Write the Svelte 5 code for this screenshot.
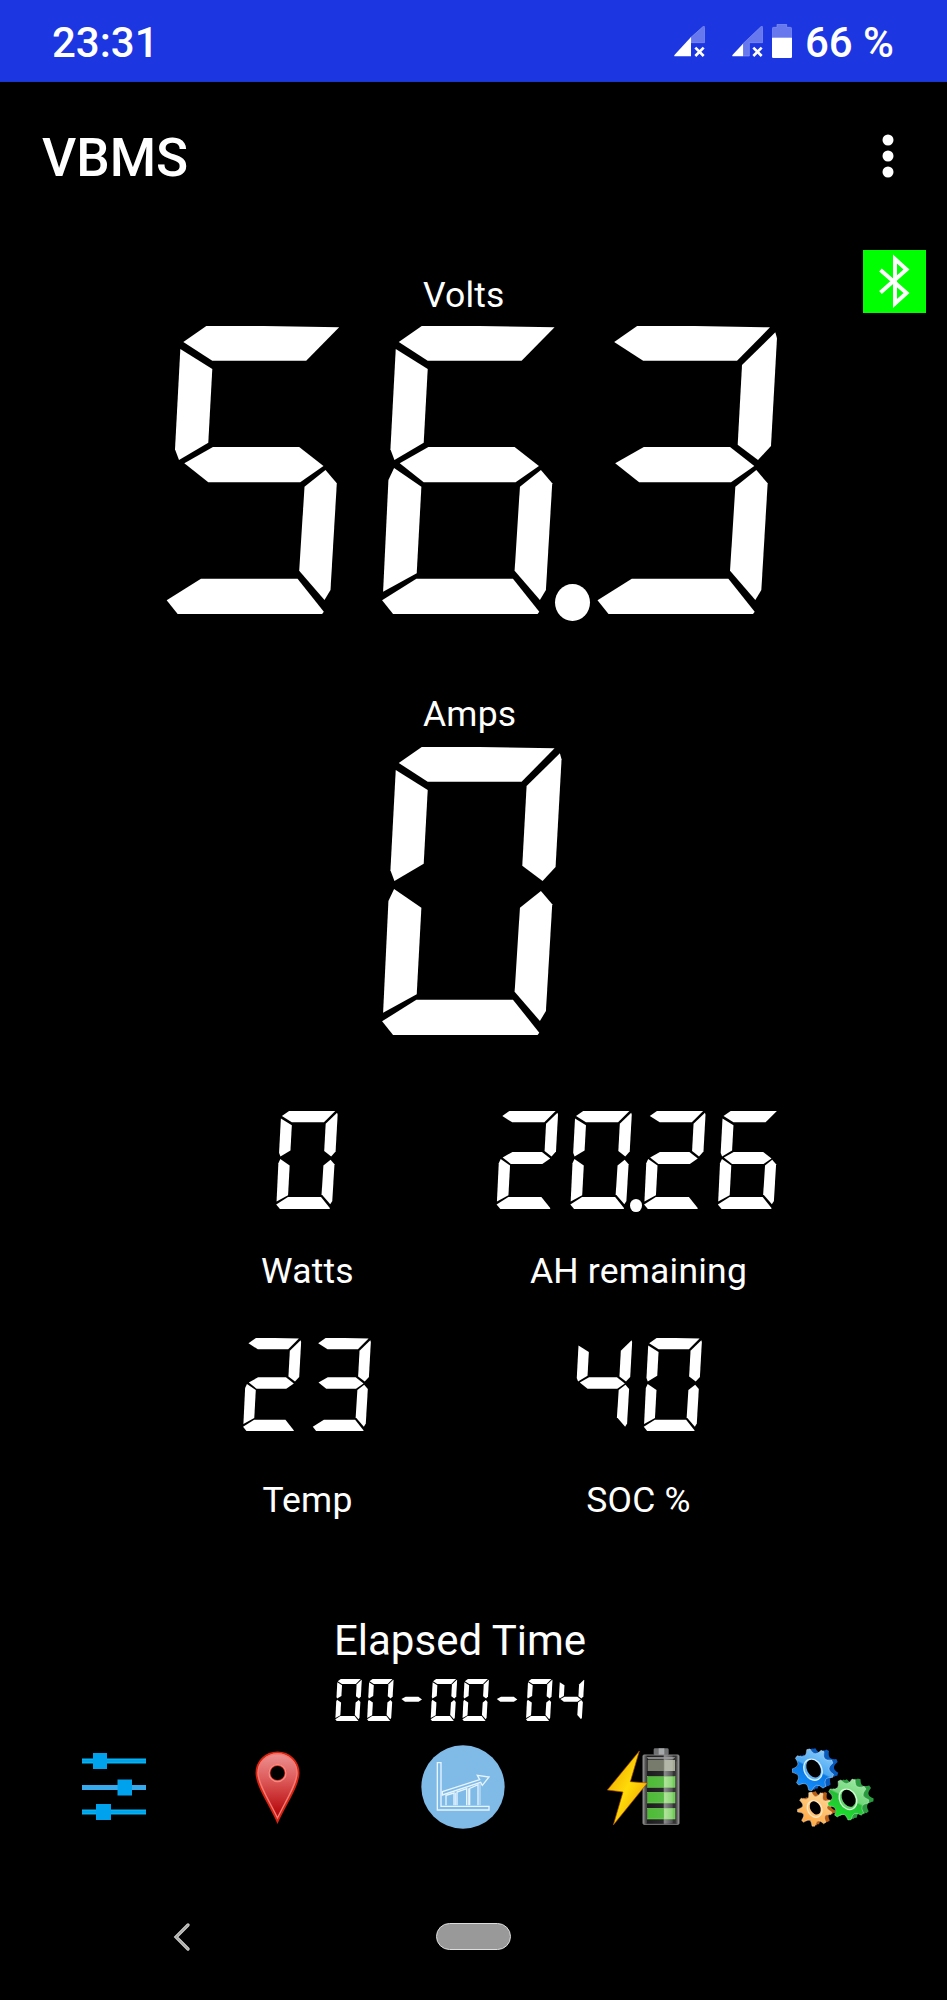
<script lang="ts">
	type Point = [number, number];

	interface Reading {
		value: string;
		label: string;
	}

	// One digit cell is 647 x 864 units, segments are named a-g clockwise from the top
	const CELL_W = 647;
	const CELL_H = 864;
	const shapes: Record<string, Point[]> = {
		a: [[99, 48], [168, 0], [340, 0], [567, 4], [468, 104], [186, 104]],
		b: [[583, 19], [588, 37], [570, 360], [531, 402], [470, 356], [483, 117]],
		c: [[526, 432], [560, 472], [541, 792], [523, 822], [447, 734], [463, 482]],
		d: [[49, 823], [152, 758], [442, 758], [521, 857], [516, 864], [82, 864]],
		e: [[85, 426], [167, 482], [153, 742], [52, 797], [68, 462]],
		f: [[90, 69], [186, 129], [174, 350], [86, 402], [74, 370]],
		g: [[102, 412], [188, 363], [447, 363], [520, 420], [450, 469], [174, 469]]
	};
	const lit: Record<string, string> = {
		'0': 'abcdef',
		'1': 'bc',
		'2': 'abged',
		'3': 'abgcd',
		'4': 'fgbc',
		'5': 'afgcd',
		'6': 'afgecd',
		'7': 'abc',
		'8': 'abcdefg',
		'9': 'abcdfg',
		'-': 'g'
	};

	function clip(seg: string) {
		const pts = shapes[seg].map(([x, y]) => `${((x / CELL_W) * 100).toFixed(2)}% ${((y / CELL_H) * 100).toFixed(2)}%`);
		return `polygon(${pts.join(', ')})`;
	}

	// Pointed teeth with a rounded valley between each pair
	function gear(cx: number, cy: number, r: number, depth: number, teeth: number, turn: number) {
		const step = (Math.PI * 2) / teeth;
		const at = (i: number, rad: number) => {
			const t = turn + i * step;
			return `${(cx + Math.cos(t) * rad).toFixed(1)} ${(cy + Math.sin(t) * rad).toFixed(1)}`;
		};
		let d = `M${at(-0.11, r)}`;
		for (let i = 0; i < teeth; i++) {
			d += `L${at(i + 0.11, r)}Q${at(i + 0.28, r - depth)} ${at(i + 0.5, r - depth)}`;
			d += `Q${at(i + 0.72, r - depth)} ${at(i + 0.89, r)}`;
		}
		return d + 'Z';
	}

	const volts = '56.3';
	const amps = '0';
	const elapsed = '00-00-04';
	const capacity: Reading[] = [
		{ value: '0', label: 'Watts' },
		{ value: '20.26', label: 'AH remaining' }
	];
	const state: Reading[] = [
		{ value: '23', label: 'Temp' },
		{ value: '40', label: 'SOC %' }
	];
	const gears = [
		{ name: 'orange', cx: 68, cy: 192, r: 52, turn: 0.25, dx: 13, dy: -4, hx: 15, hy: 21 },
		{ name: 'green', cx: 168, cy: 163, r: 62, turn: 0.1, dx: 17, dy: -4, hx: 19, hy: 27 },
		{ name: 'blue', cx: 63, cy: 74, r: 63, turn: 0.3, dx: 16, dy: -4, hx: 20, hy: 28 }
	];
</script>

{#snippet display(value: string, size: string)}
	<div class="display {size}" role="img" aria-label={value}>
		{#each value as char}
			{#if char === '.'}
				<span class="point"></span>
			{:else}
				<span class="digit">
					{#each lit[char] as seg}
						<span class="segment" style:clip-path={clip(seg)}></span>
					{/each}
				</span>
			{/if}
		{/each}
	</div>
{/snippet}

<div class="screen">
	<header class="status">
		<span class="clock">23:31</span>
		<div class="indicators">
			<svg class="signal" width="31" height="31" viewBox="0 0 93 93">
				<path d="M51 34L88 1Q92 0 92 5V50H51Z" fill="#6778ee" stroke="#8795f3" stroke-width="2" />
				<path d="M51 33V91H3Q-1 90 2 86Z" fill="#fff" />
				<path d="M64 65L89 90M89 65L64 90" stroke="#fff" stroke-width="8" />
			</svg>
			<svg class="signal" width="31" height="31" viewBox="0 0 93 93">
				<path d="M33 53L88 1Q92 0 92 5V50H52V90H33Z" fill="#6778ee" stroke="#8795f3" stroke-width="2" />
				<path d="M33 53V91H3Q-1 90 2 86Z" fill="#fff" />
				<path d="M64 65L89 90M89 65L64 90" stroke="#fff" stroke-width="8" />
			</svg>
			<svg class="battery" width="20" height="34" viewBox="0 0 60 102">
				<path d="M1 41V14Q1 10 5 10H15V1H44V10H55Q59 10 59 14V41Z" fill="#6778ee" stroke="#8795f3" stroke-width="2" />
				<path d="M0 41H60V98Q60 102 56 102H4Q0 102 0 98Z" fill="#fff" />
			</svg>
			<span class="percent">66 %</span>
		</div>
	</header>

	<div class="toolbar">
		<h1>VBMS</h1>
		<svg class="menu" width="12" height="44" viewBox="0 0 12 44">
			<circle cx="6" cy="6" r="5.5" />
			<circle cx="6" cy="22" r="5.5" />
			<circle cx="6" cy="38" r="5.5" />
		</svg>
	</div>

	<main>
		<div class="bluetooth">
			<svg width="63" height="63" viewBox="0 0 63 63">
				<path d="M17.500 20L43.500 43L32 53.500V9L43.500 19.500L17.500 42.500" fill="none" stroke="#fff" stroke-width="4" />
			</svg>
		</div>

		<section class="reading">
			<span class="label">Volts</span>
			{@render display(volts, 'large')}
		</section>
		<section class="reading amps">
			<span class="label">Amps</span>
			{@render display(amps, 'large')}
		</section>

		<section class="pair capacity">
			{#each capacity as item}
				<div class="cell">
					{@render display(item.value, 'medium')}
					<span class="label">{item.label}</span>
				</div>
			{/each}
		</section>
		<section class="pair state">
			{#each state as item}
				<div class="cell">
					{@render display(item.value, 'small')}
					<span class="label">{item.label}</span>
				</div>
			{/each}
		</section>

		<section class="elapsed">
			<span class="elapsed-label">Elapsed Time</span>
			{@render display(elapsed, 'tiny')}
		</section>
	</main>

	<nav class="actions">
		<svg width="64" height="68" viewBox="0 0 64 68">
			<g fill="#00b4f5">
				<path d="M0 5.500H64V10.500H0ZM0 56.500H64V61.500H0Z" />
				<path d="M0 32H64V37H0Z" fill="#36aaec" />
				<path d="M11 0H25V16H11ZM35.500 26.500H50V42.500H35.500ZM14 51H29V67H14Z" fill="#00a2ed" />
			</g>
			<path d="M25 8H64M0 8H11M29 59H64M0 59H14" stroke="#008fe0" stroke-width="1" />
		</svg>

		<svg width="45" height="73" viewBox="0 0 45 73">
			<defs>
				<linearGradient id="pin" x1="0" y1="0" x2="0" y2="1">
					<stop offset="0" stop-color="#ee9494" />
					<stop offset=".4" stop-color="#dd5959" />
					<stop offset=".85" stop-color="#b90f12" />
				</linearGradient>
			</defs>
			<path
				d="M22.500 1.500C10.500 1.500 1.500 10.500 1.500 22C1.500 34 14 52 22.500 70.500C31 52 43.500 34 43.500 22C43.500 10.500 34.500 1.500 22.500 1.500ZM22.500 14A8 8 0 1 1 22.500 30A8 8 0 1 1 22.500 14Z"
				fill="url(#pin)"
				fill-rule="evenodd"
				stroke="#d9230f"
				stroke-width="2"
			/>
			<path d="M22.500 3C11.500 3 3 11 3 22C3 33 15 51 22.500 67C30 51 42 33 42 22C42 11 33.500 3 22.500 3Z" fill="none" stroke="#f47a75" stroke-width="1.300" />
			<circle cx="22.500" cy="22" r="8.500" fill="none" stroke="#f38c88" stroke-width="1.500" />
		</svg>

		<svg width="84" height="84" viewBox="0 0 252 252">
			<circle cx="126" cy="126" r="125" fill="#80bae6" />
			<g fill="none" stroke="#e7f5ff" stroke-width="4">
				<path d="M49 53H60V184H204V195H49Z" />
				<path d="M64 140L176 104L169 91L204 96L184 121L179 112L64 150Z" stroke-width="4" />
				<path d="M75 181V151L99 144V181M108 181V141L137 131V181M146 181V130L171 119V181" stroke-width="4" />
				<path d="M103 181V143M142 181V130" stroke-width="3" />
				<path d="M177 181V116" stroke="#bcdcf5" />
			</g>
		</svg>

		<svg width="73" height="78" viewBox="0 0 219 234">
			<defs>
				<linearGradient id="bolt" x1="0" y1="0" x2="1" y2="1">
					<stop offset="0" stop-color="#ec9500" />
					<stop offset=".5" stop-color="#ffdc08" />
					<stop offset="1" stop-color="#eb8e00" />
				</linearGradient>
				<linearGradient id="shell" x1="0" y1="0" x2="1" y2="0">
					<stop offset="0" stop-color="#999" />
					<stop offset=".12" stop-color="#1c1c1e" />
					<stop offset=".56" stop-color="#29292c" />
					<stop offset=".6" stop-color="#77777a" />
					<stop offset=".8" stop-color="#353538" />
					<stop offset=".92" stop-color="#333" />
					<stop offset="1" stop-color="#aaa" />
				</linearGradient>
				<linearGradient id="charge" x1="0" y1="0" x2="1" y2="0">
					<stop offset="0" stop-color="#4dbb36" />
					<stop offset=".58" stop-color="#58bd45" />
					<stop offset=".62" stop-color="#a4df89" />
					<stop offset="1" stop-color="#67c950" />
				</linearGradient>
			</defs>
			<rect x="140" y="1" width="45" height="20" rx="4" fill="#707173" />
			<rect x="155" y="1" width="17" height="20" fill="#a7a8a9" />
			<rect x="108" y="21" width="108" height="208" rx="3" fill="url(#shell)" stroke="#858585" stroke-width="3" />
			<path d="M119 27H205L198 34H124Z" fill="#858585" />
			<path d="M117 25V225M208 40V225" stroke="#555" stroke-width="3" />
			<rect x="122" y="36" width="82" height="33" fill="#777b6b" />
			<rect x="172" y="36" width="32" height="33" fill="#a5aa97" />
			<g fill="url(#charge)" stroke="#83d963" stroke-width="1.500">
				<rect x="122" y="86" width="82" height="32" />
				<rect x="122" y="133" width="82" height="32" />
				<rect x="122" y="181" width="82" height="32" />
			</g>
			<path d="M170 22H197V226H170Z" fill="#fff" opacity=".16" />
			<path d="M97 9L70 101L121 105L19 231L48 132L1 126Z" fill="url(#bolt)" stroke="#a94b00" stroke-width="2" />
		</svg>

		<svg width="84" height="84" viewBox="0 0 252 252">
			<defs>
				<linearGradient id="blue" x1="0.800" y1="0" x2="0.300" y2="1">
					<stop offset="0" stop-color="#91d0fc" />
					<stop offset=".48" stop-color="#4ba8f2" />
					<stop offset=".52" stop-color="#0877e2" />
					<stop offset="1" stop-color="#1690ff" />
				</linearGradient>
				<linearGradient id="green" x1="0.800" y1="0" x2="0.300" y2="1">
					<stop offset="0" stop-color="#a0eba5" />
					<stop offset=".48" stop-color="#70d779" />
					<stop offset=".52" stop-color="#25bd36" />
					<stop offset="1" stop-color="#19e629" />
				</linearGradient>
				<linearGradient id="orange" x1="0.800" y1="0" x2="0.300" y2="1">
					<stop offset="0" stop-color="#ffd89a" />
					<stop offset=".5" stop-color="#ffc06a" />
					<stop offset="1" stop-color="#ffa43e" />
				</linearGradient>
			</defs>
			{#each gears as g}
				<g class="gear {g.name}">
					<path class="side" d={gear(g.cx + g.dx, g.cy + g.dy, g.r - 2, 14, 9, g.turn)} />
					<path class="side" d={gear(g.cx + g.dx / 2, g.cy + g.dy / 2, g.r - 1, 14, 9, g.turn)} />
					<path d={gear(g.cx, g.cy, g.r, 15, 9, g.turn)} fill="url(#{g.name})" class="face" />
					<ellipse cx={g.cx} cy={g.cy} rx={g.hx + 6} ry={g.hy + 5} transform="rotate(-28 {g.cx} {g.cy})" class="rim" />
					<ellipse cx={g.cx + 3} cy={g.cy - 2} rx={g.hx} ry={g.hy} transform="rotate(-28 {g.cx} {g.cy})" />
				</g>
			{/each}
		</svg>
	</nav>

	<footer class="system-nav">
		<svg width="17" height="28" viewBox="0 0 17 28">
			<path d="M15 2L3 14L15 26" fill="none" stroke="#d4d4d2" stroke-width="3.200" stroke-linecap="round" />
			<path d="M15 2L3 14L15 26" fill="none" stroke="#a3a3a0" stroke-width="1.300" stroke-linecap="round" />
		</svg>
		<span class="home"></span>
	</footer>
</div>

<style>
	:global(body) {
		background: #000;
	}

	.screen {
		width: 947px;
		height: 2000px;
		overflow: hidden;
		background: #000;
		color: #fff;
		font-family: Roboto, 'Liberation Sans', sans-serif;
	}

	.status {
		display: flex;
		justify-content: space-between;
		box-sizing: border-box;
		height: 82px;
		padding: 0 53px 0 52px;
		background: #1c36e1;
		border-bottom: 1px solid #1839c7;
		font-size: 42px;
		font-weight: 500;
		line-height: 85px;
	}

	.indicators {
		display: flex;
	}

	.signal {
		margin: 26px 27px 0 0;
	}

	.signal + .signal {
		margin-right: 9px;
	}

	.battery {
		margin: 24px 13px 0 0;
	}

	.toolbar {
		display: flex;
		align-items: center;
		justify-content: space-between;
		height: 151px;
		padding: 0 53px 0 42px;
	}

	h1 {
		margin: 0;
		font-size: 53px;
		font-weight: 500;
		line-height: 60px;
	}

	.menu {
		margin-bottom: 4px;
		fill: #fff;
	}

	main {
		display: flow-root;
		position: relative;
		height: 1512px;
	}

	.bluetooth {
		position: absolute;
		top: 17px;
		right: 21px;
		width: 63px;
		height: 63px;
		background: #0f0;
	}

	.label {
		font-size: 35.500px;
		letter-spacing: 0.2px;
		line-height: 40px;
		white-space: nowrap;
	}

	.reading {
		display: flex;
		flex-direction: column;
		align-items: center;
		gap: 11px;
		padding-top: 42px;
	}

	.reading .label {
		align-self: flex-start;
		margin-left: 423px;
	}

	.amps {
		gap: 13px;
		padding-top: 80px;
	}

	.pair {
		display: grid;
		grid-template-columns: 331px 331px;
		margin-left: 142px;
	}

	.cell {
		display: flex;
		flex-direction: column;
		align-items: center;
	}

	.capacity {
		padding-top: 75.500px;
	}

	.capacity .cell {
		gap: 42px;
	}

	.state {
		padding-top: 47px;
	}

	.state .cell {
		gap: 48.500px;
	}

	.elapsed {
		display: flex;
		flex-direction: column;
		align-items: center;
		gap: 13.500px;
		margin-right: 27px;
		padding-top: 97.500px;
	}

	.elapsed-label {
		font-size: 42px;
		line-height: 48px;
	}

	.display {
		display: flex;
		height: 1em;
		line-height: 1;
	}

	.large {
		font-size: 288px;
	}

	.medium {
		font-size: 98.600px;
	}

	.small {
		font-size: 93.200px;
	}

	.tiny {
		font-size: 42.500px;
	}

	.digit {
		display: grid;
		width: 0.748em;
		height: 1em;
	}

	.segment {
		grid-area: 1 / 1;
		background: #fff;
	}

	.point {
		width: 0.122em;
		height: 0.13em;
		margin: 0.895em -0.031em 0 -0.091em;
		border-radius: 50%;
		background: #fff;
	}

	.actions {
		display: grid;
		grid-template-columns: 162px 165px 206px 155px 226px;
		align-items: center;
		justify-items: center;
		height: 84px;
		padding-left: 33px;
	}

	.gear .face {
		stroke: #fff;
		stroke-opacity: 0.55;
		stroke-width: 2;
		stroke-linejoin: round;
	}

	.gear .rim {
		fill: #62b5f5;
		stroke: #d9f0ff;
		stroke-width: 4;
	}

	.blue .side {
		fill: #085bbd;
	}

	.green .side {
		fill: #2a9b3e;
	}

	.green .rim {
		fill: #64d46d;
		stroke: #d5f9d9;
	}

	.orange .side {
		fill: #b95e12;
	}

	.orange .rim {
		fill: #ffc477;
		stroke: #ffe7c4;
	}

	.system-nav {
		display: flex;
		align-items: flex-start;
		gap: 246px;
		box-sizing: border-box;
		height: 171px;
		padding: 94px 0 0 173px;
	}

	.home {
		box-sizing: border-box;
		width: 75px;
		height: 27px;
		border: 1px solid #ddd;
		border-radius: 14px;
		background: #999;
	}
</style>
